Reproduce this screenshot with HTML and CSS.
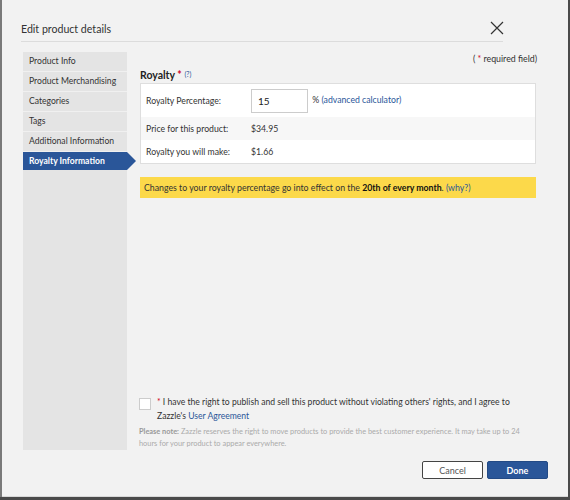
FILE: index.html
```html
<!DOCTYPE html>
<html lang="en">
<head>
  <meta charset="UTF-8">
  <meta name="viewport" content="width=device-width, initial-scale=1.0">
  <title>Edit product details</title>
  <link rel="stylesheet" href="styles.css">
</head>
<body>
  <div class="modal">
    <div class="modal-header">
      <h1>Edit product details</h1>
      <button class="close" aria-label="Close">
        <svg width="14" height="14" viewBox="0 0 14 14">
          <path d="M1 1 L13 13 M13 1 L1 13" stroke="#333" stroke-width="1.2" fill="none"/>
        </svg>
      </button>
    </div>

    <div class="modal-body">
      <ul class="side-nav">
        <li>Product Info</li>
        <li>Product Merchandising</li>
        <li>Categories</li>
        <li>Tags</li>
        <li>Additional Information</li>
        <li class="active">Royalty Information</li>
      </ul>

      <div class="main">
        <div class="required-note">( <span class="star">*</span> required field)</div>
        <h2>Royalty <span class="star">*</span> <a class="help" href="#">(?)</a></h2>

        <table class="royalty-table">
          <tr class="row-input">
            <td class="label">Royalty Percentage:</td>
            <td><input type="text" value="15"> % <a href="#">(advanced calculator)</a></td>
          </tr>
          <tr class="row-alt">
            <td class="label">Price for this product:</td>
            <td>$34.95</td>
          </tr>
          <tr>
            <td class="label">Royalty you will make:</td>
            <td>$1.66</td>
          </tr>
        </table>

        <div class="notice">
          Changes to your royalty percentage go into effect on the <b>20th of every month</b>. <a href="#">(why?)</a>
        </div>

        <div class="agreement">
          <label class="agree">
            <span class="checkbox"></span>
            <span><span class="star">*</span> I have the right to publish and sell this product without violating others' rights, and I agree to Zazzle's <a href="#">User Agreement</a></span>
          </label>
          <p class="fine-print"><b>Please note:</b> Zazzle reserves the right to move products to provide the best customer experience. It may take up to 24 hours for your product to appear everywhere.</p>
        </div>
      </div>
    </div>

    <div class="modal-footer">
      <button class="btn btn-cancel">Cancel</button>
      <button class="btn btn-done">Done</button>
    </div>
  </div>
</body>
</html>
```

FILE: styles.css
```css
body {
  margin: 0;
  background: #4a4a4a;
  font-family: Lato, "Open Sans", Arial, sans-serif;
  color: #333;
}
.modal {
  margin-left: 2px;
  width: 566px;
  height: 497px;
  background: #f2f2f2;
  border-bottom: 1px solid #d8d8d8;
  box-sizing: border-box;
  box-shadow: -2px 0 0 #7a7a7a;
}
.modal-header {
  display: flex;
  align-items: center;
  justify-content: space-between;
  margin-left: 19px;
  width: 482px;
  height: 42px;
  box-sizing: border-box;
  padding-top: 17px;
  border-bottom: 1px solid #dcdcdc;
}
.modal-header h1 {
  margin: 0;
  font-size: 10.6px;
  font-weight: normal;
  color: #333;
}
.close {
  background: none;
  border: none;
  padding: 0;
  width: 14px;
  height: 14px;
  margin-right: -1px;
  margin-top: -3px;
  cursor: pointer;
}
.modal-body {
  display: flex;
  margin-top: 10px;
  margin-left: 21px;
  height: 398px;
}
.side-nav {
  list-style: none;
  margin: 0;
  padding: 0;
  width: 104px;
  background: #e4e4e4;
  font-size: 8.6px;
}
.side-nav li {
  height: 19px;
  line-height: 19px;
  padding-left: 6px;
  border-bottom: 1px solid #f0f0f0;
}
.side-nav li.active {
  position: relative;
  background: #2a5699;
  color: #fff;
  font-weight: bold;
  border-bottom: none;
  height: 18px;
  line-height: 18px;
}
.side-nav li.active::after {
  content: "";
  position: absolute;
  right: -9px;
  top: 0;
  border-left: 9px solid #2a5699;
  border-top: 9px solid transparent;
  border-bottom: 9px solid transparent;
}
.main {
  display: flex;
  flex-direction: column;
  margin-left: 13px;
  width: 396px;
}
.star {
  color: #d0021b;
}
a {
  color: #2a5699;
  text-decoration: none;
}
.required-note {
  text-align: right;
  font-size: 8.8px;
  line-height: 12px;
  margin-top: 1px;
  margin-right: -1px;
}
.main h2 {
  margin: 0;
  font-size: 10.5px;
  line-height: 18px;
  font-weight: bold;
  color: #222;
}
.help {
  font-size: 7px;
  font-weight: normal;
  vertical-align: 2px;
}
.royalty-table {
  width: 100%;
  border-collapse: collapse;
  border: 1px solid #dedede;
  background: #fff;
  font-size: 8.7px;
  margin-top: -1px;
}
.royalty-table td {
  padding: 0;
  height: 23px;
}
.royalty-table td.label {
  width: 105px;
  padding-left: 5px;
}
.royalty-table tr.row-input td {
  height: 33px;
}
.royalty-table tr.row-alt td {
  background: #f7f7f7;
}
.royalty-table input {
  width: 57px;
  height: 24px;
  box-sizing: border-box;
  border: 1px solid #ccc;
  padding: 0 6px;
  margin-right: 2px;
  font: inherit;
  font-size: 10px;
  color: #222;
  vertical-align: middle;
}
.notice {
  margin-top: 13px;
  background: #fcd94a;
  font-size: 8.75px;
  line-height: 21px;
  padding-left: 4px;
}
.notice b {
  color: #111;
}
.agreement {
  margin-top: auto;
}
.agree {
  display: flex;
  align-items: flex-start;
  font-size: 8.6px;
  line-height: 14px;
}
.checkbox {
  flex: none;
  width: 10px;
  height: 10px;
  margin: 3px 6px 0 -1px;
  background: #fff;
  border: 1px solid #ccc;
}
.fine-print {
  margin: 3px 0 0 -1px;
  max-width: 390px;
  font-size: 7.4px;
  line-height: 12px;
  color: #aaa;
}
.fine-print b {
  color: #999;
}
.modal-footer {
  display: flex;
  justify-content: flex-end;
  gap: 4px;
  margin-top: 11px;
  padding-right: 20px;
}
.btn {
  width: 61px;
  height: 18px;
  font-family: inherit;
  font-size: 9px;
  border-radius: 2px;
  cursor: pointer;
}
.btn-cancel {
  background: #fff;
  border: 1px solid #444;
  color: #555;
}
.btn-done {
  background: #2a5699;
  border: 1px solid #234a85;
  color: #fff;
  font-weight: bold;
}
```
